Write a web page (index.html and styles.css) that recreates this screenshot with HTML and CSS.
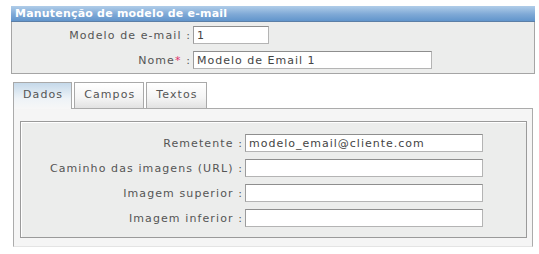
FILE: index.html
```html
<!DOCTYPE html>
<html lang="pt">
<head>
<meta charset="utf-8">
<link rel="stylesheet" href="styles.css">
</head>
<body>
<div class="wrap">
  <div class="title">Manutenção de modelo de e-mail</div>
  <div class="box">
    <div class="form form-top">
      <label class="lbl">Modelo de e-mail :</label>
      <div><input class="inp inp-short" type="text" value="1"></div>
      <label class="lbl">Nome<span class="req">*</span> :</label>
      <div><input class="inp inp-long" type="text" value="Modelo de Email 1"></div>
    </div>
  </div>
  <div class="tabs">
    <div class="tab active">Dados</div>
    <div class="tab">Campos</div>
    <div class="tab">Textos</div>
  </div>
  <div class="panel">
    <div class="fieldset">
      <div class="form form-inner">
        <label class="lbl">Remetente :</label>
        <div><input class="inp inp-wide" type="text" value="modelo_email@cliente.com"></div>
        <label class="lbl">Caminho das imagens (URL) :</label>
        <div><input class="inp inp-wide" type="text" value=""></div>
        <label class="lbl">Imagem superior :</label>
        <div><input class="inp inp-wide" type="text" value=""></div>
        <label class="lbl">Imagem inferior :</label>
        <div><input class="inp inp-wide" type="text" value=""></div>
      </div>
    </div>
  </div>
</div>
</body>
</html>
```

FILE: styles.css
```css
html, body {
  margin: 0;
  padding: 0;
  background: #ffffff;
}
body {
  font-family: "DejaVu Sans", Verdana, sans-serif;
  font-size: 11px;
  letter-spacing: 1.1px;
  color: #555555;
}
.wrap {
  margin: 6px 0 0 11px;
  width: 524px;
}
.title {
  height: 15px;
  line-height: 15px;
  padding-left: 4px;
  color: #ffffff;
  font-weight: bold;
  font-size: 11px;
  letter-spacing: 0.2px;
  background: linear-gradient(#b0cde9, #7fa9d6 55%, #6195cc);
  border-bottom: 1px solid #5c7fa6;
}
.box {
  background: #ecedec;
  border: 1px solid #a5a5a5;
  border-top: none;
  padding: 4px 0 4px 0;
}
.form {
  display: grid;
  row-gap: 7px;
  align-items: center;
}
.form-top {
  grid-template-columns: 181px 1fr;
}
.form-inner {
  grid-template-columns: 224px 1fr;
}
.lbl {
  text-align: right;
  padding-right: 2px;
  white-space: nowrap;
}
.req {
  color: #e0306a;
}
.inp {
  display: block;
  box-sizing: border-box;
  height: 18px;
  margin: 0;
  padding: 0 3px;
  border: 1px solid #b4b4b4;
  border-top-color: #8e8e8e;
  border-left-color: #9c9c9c;
  background: #ffffff;
  font-family: "DejaVu Sans", Verdana, sans-serif;
  font-size: 11px;
  letter-spacing: 1px;
  color: #444444;
}
.inp-short { width: 76px; }
.inp-long { width: 239px; }
.inp-wide { width: 238px; }
.tabs {
  display: flex;
  gap: 2px;
  margin: 8px 0 0 2px;
  height: 26px;
  align-items: flex-end;
}
.tab {
  box-sizing: border-box;
  height: 26px;
  line-height: 24px;
  padding: 0 8px 0 9px;
  border: 1px solid #a9a9a9;
  border-bottom: none;
  background: linear-gradient(#ffffff, #f4f4f4 60%, #e2e2e2);
  color: #555555;
  font-size: 11px;
}
.tab.active {
  background: linear-gradient(#c5d9ea, #eef3f7 60%, #f7f7f7);
  height: 27px;
  margin-bottom: -1px;
  position: relative;
  z-index: 1;
}
.panel {
  margin-left: 2px;
  width: 520px;
  box-sizing: border-box;
  border: 1px solid #ababab;
  border-bottom-color: #e4e4e4;
  background: #f5f5f5;
  padding: 12px 5px 8px 6px;
}
.fieldset {
  border: 1px solid #9a9a9a;
  box-shadow: inset 1px 1px 0 #ffffff;
  background: #ecedec;
  padding: 12px 0 10px 0;
}
```
